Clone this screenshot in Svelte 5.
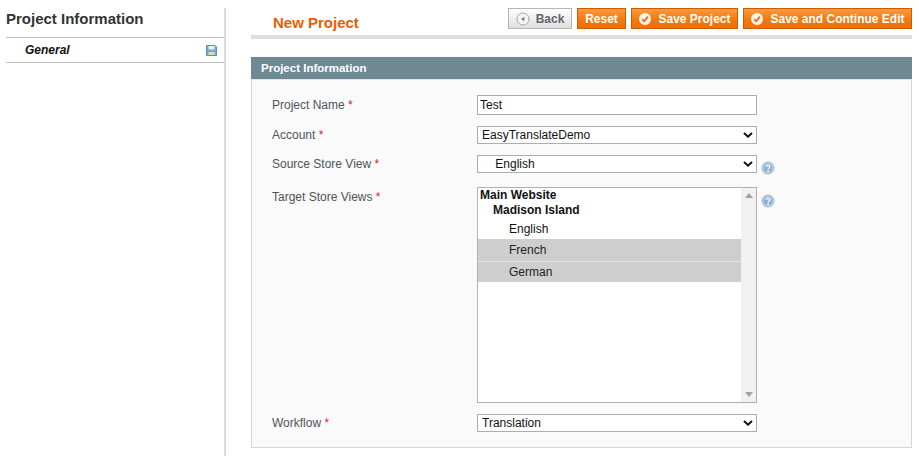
<script>
  const selects = {
    acc: "EasyTranslateDemo",
    src: "\u00a0\u00a0\u00a0\u00a0English",
    wf: "Translation"
  };
</script>

{#snippet check()}
  <svg class="ico" width="14" height="14" viewBox="0 0 14 14" aria-hidden="true">
    <circle cx="7" cy="7" r="6" fill="#fff" fill-opacity=".92" />
    <path d="M4.2 7.2 6.3 9.4 9.8 4.6" fill="none" stroke="#e8701a" stroke-width="1.8" />
  </svg>
{/snippet}

{#snippet help()}
  <svg class="help" width="14" height="14" viewBox="0 0 14 14" aria-hidden="true">
    <circle cx="7" cy="7" r="6.5" fill="#9db9da" />
    <circle cx="7" cy="7" r="5.500" fill="#c8d8ec" />
    <circle cx="7" cy="7" r="4.500" fill="#8fadd2" />
    <path d="M5.2 5.6C5.4 3.9 8.9 3.9 8.9 5.7 8.9 7 7.1 7 7.1 8.3" fill="none" stroke="#fff" stroke-width="1.5" />
    <rect x="6.3" y="9.2" width="1.6" height="1.6" fill="#fff" />
  </svg>
{/snippet}

{#snippet dropdown(id)}
  <span class="sel-wrap">
    <select {id}><option>{selects[id]}</option></select>
    <svg class="chev" width="10" height="6" viewBox="0 0 10 6" aria-hidden="true">
      <path d="M1 1 5 4.700 9 1" fill="none" stroke="#111" stroke-width="2" />
    </svg>
  </span>
{/snippet}

<div class="page">
  <aside class="side">
    <h3>Project Information</h3>
    <div class="tab">
      <span>General</span>
      <svg width="11" height="11" viewBox="0 0 11 11" aria-hidden="true">
        <path d="M.5.5H9L10.500 2V10.500H.5Z" fill="#7ea6dc" stroke="#5c8ac8" />
        <rect x="2.500" y="1" width="6" height="3.500" fill="#e4edf8" />
        <rect x="2.500" y="7" width="6" height="3" fill="#d3e4a4" />
      </svg>
    </div>
  </aside>

  <main class="main">
    <header class="head">
      <h3>New Project</h3>
      <div class="actions">
        <button class="btn back">
          <svg class="ico" width="14" height="14" viewBox="0 0 14 14" aria-hidden="true">
            <circle cx="7" cy="7" r="6" fill="#f4f4f4" stroke="#a8a8a8" />
            <path d="M8.3 4.7V9.3L5 7Z" fill="#777" />
          </svg>
          Back
        </button>
        <button class="btn reset">Reset</button>
        <button class="btn save">{@render check()}Save Project</button>
        <button class="btn cont">{@render check()}Save and Continue Edit</button>
      </div>
    </header>

    <section class="panel">
      <div class="bar">Project Information</div>
      <div class="body">
        <div class="row r1">
          <label for="name">Project Name <em>*</em></label>
          <input id="name" value="Test" />
        </div>
        <div class="row r2">
          <label for="acc">Account <em>*</em></label>
          {@render dropdown("acc")}
        </div>
        <div class="row r3">
          <label for="src">Source Store View <em>*</em></label>
          {@render dropdown("src")}
          {@render help()}
        </div>
        <div class="row r4">
          <span class="lbl">Target Store Views <em>*</em></span>
          <div class="list">
            <div class="items">
              <div class="grp">Main Website</div>
              <div class="grp g2">Madison Island</div>
              <div class="opt o1">English</div>
              <div class="opt o2 sel">French</div>
              <div class="opt o3 sel">German</div>
            </div>
            <div class="scroll">
              <svg width="8" height="5" viewBox="0 0 8 5" aria-hidden="true"><path d="M0 5 4 0 8 5Z" fill="#a3a3a3" /></svg>
              <svg width="8" height="5" viewBox="0 0 8 5" aria-hidden="true"><path d="M0 0 4 5 8 0Z" fill="#a3a3a3" /></svg>
            </div>
          </div>
          {@render help()}
        </div>
        <div class="row r5">
          <label for="wf">Workflow <em>*</em></label>
          {@render dropdown("wf")}
        </div>
      </div>
    </section>
  </main>
</div>

<style>
  :global(body) {
    margin: 0;
    background: #fff;
    font: 12px "Liberation Sans", Arial, sans-serif;
    color: #2f2f2f;
  }
  .page {
    display: flex;
    height: 456px;
    overflow: hidden;
  }
  .side {
    box-sizing: border-box;
    width: 220px;
    margin: 8px 0 0 6px;
    border-right: 2px solid #dcdcdc;
  }
  .side h3 {
    margin: 0;
    height: 30px;
    box-sizing: border-box;
    padding-top: 2px;
    font-size: 15px;
    line-height: 18px;
    color: #333;
    border-bottom: 1px solid #bdbdbd;
  }
  .tab {
    display: flex;
    align-items: center;
    justify-content: space-between;
    height: 25px;
    box-sizing: border-box;
    padding: 0 7px 0 19px;
    border-bottom: 1px solid #bdbdbd;
    font-weight: bold;
    font-style: italic;
    color: #111;
  }
  .main {
    width: 661px;
    margin-left: 25px;
  }
  .head {
    display: flex;
    justify-content: space-between;
    height: 27px;
    padding-top: 8px;
    border-bottom: 4px solid #dfdfdf;
  }
  .head h3 {
    margin: 0;
    padding: 6px 0 0 22px;
    font-size: 15px;
    line-height: 17px;
    color: #eb5e00;
  }
  .actions {
    display: flex;
    gap: 5px;
    height: 21px;
  }
  .btn {
    display: flex;
    align-items: center;
    justify-content: center;
    gap: 6px;
    box-sizing: border-box;
    height: 21px;
    padding: 0;
    font: bold 12px "Liberation Sans", Arial, sans-serif;
    color: #fff;
    border: 1px solid #cf5a00;
    background: linear-gradient(#fb9a3e, #f5790f 55%, #ef6f08);
  }
  .back {
    width: 64px;
    color: #5f6670;
    border-color: #b5b5b5;
    background: linear-gradient(#fff, #dedede);
  }
  .reset { width: 49px; }
  .save { width: 107px; }
  .cont { width: 169px; }
  .panel {
    margin-top: 18px;
  }
  .bar {
    height: 22px;
    line-height: 22px;
    padding-left: 10px;
    background: #6f8992;
    color: #fff;
    font-weight: bold;
    font-size: 11.5px;
  }
  .body {
    box-sizing: border-box;
    height: 369px;
    padding: 15px 0 0 20px;
    background: #fafafa;
    border: 1px solid #d6d6d6;
    border-top-color: #e4e4e4;
  }
  .row {
    display: flex;
    align-items: flex-start;
    color: #4f545b;
  }
  label, .lbl {
    display: block;
    box-sizing: border-box;
    width: 205px;
    flex: none;
    line-height: 18px;
  }
  em {
    color: #e01b2f;
    font-style: normal;
  }
  input, select {
    box-sizing: border-box;
    width: 280px;
    margin: 0;
    font: 12px "Liberation Sans", Arial, sans-serif;
    color: #111;
    border: 1px solid #adadad;
    background: #fff;
    border-radius: 0;
    outline: none;
  }
  input {
    height: 20px;
    padding: 0 2px;
  }
  select {
    display: block;
    height: 18px;
    padding: 0 20px 0 4px;
    appearance: none;
    -webkit-appearance: none;
  }
  .sel-wrap {
    position: relative;
    display: block;
    width: 280px;
    flex: none;
  }
  .chev {
    position: absolute;
    top: 6px;
    right: 4px;
    pointer-events: none;
  }
  .r1 { height: 20px; margin-bottom: 11px; }
  .r1 label { padding-top: 1px; }
  .r2 { height: 18px; margin-bottom: 11px; }
  .r3 { height: 18px; margin-bottom: 14px; }
  .r4 { height: 216px; margin-bottom: 11px; }
  .r4 .lbl { padding-top: 1px; }
  .r5 { height: 18px; }
  .help {
    margin: 6px 0 0 4px;
    flex: none;
  }
  .r4 .help { margin-top: 7px; }
  .list {
    box-sizing: border-box;
    display: flex;
    width: 280px;
    height: 216px;
    background: #fff;
    border: 1px solid #b0b0b0;
  }
  .items {
    flex: 1;
    color: #111;
  }
  .grp {
    font-weight: bold;
    height: 15px;
    line-height: 15px;
    padding-left: 2px;
  }
  .g2 { padding-left: 15px; }
  .opt {
    padding-left: 31px;
    box-sizing: border-box;
    height: 22px;
    line-height: 22px;
  }
  .o1 { height: 21px; }
  .o3 { height: 21px; border-top: 1px solid #e2e2e2; line-height: 20px; }
  .sel {
    background: #cecece;
    color: #222;
  }
  .scroll {
    display: flex;
    flex-direction: column;
    justify-content: space-between;
    align-items: center;
    width: 15px;
    padding: 5px 0;
    box-sizing: border-box;
    background: #f1f1f1;
  }
  .ico { flex: none; }
</style>
